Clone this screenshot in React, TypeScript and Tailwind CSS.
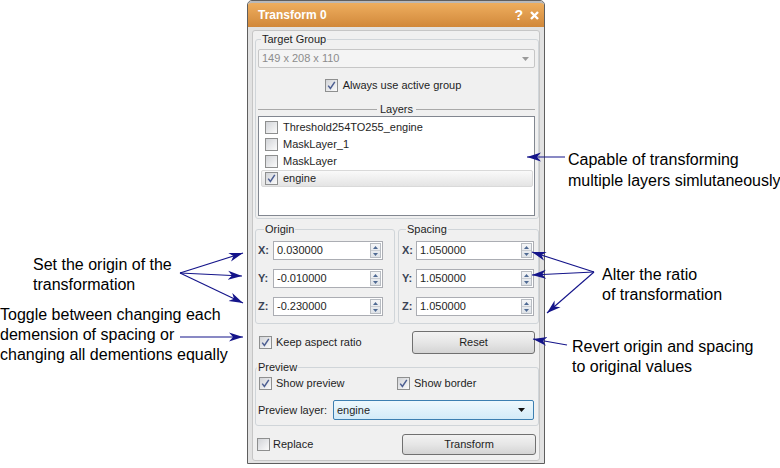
import type { ReactNode } from "react";

function Check({ checked }: { checked?: boolean }) {
  return (
    <span className="flex h-[13px] w-[13px] shrink-0 items-center justify-center border border-[#8e8f8f] bg-gradient-to-br from-[#d2d4d8] to-[#fbfbfb]">
      {checked && (
        <svg width="9" height="9" viewBox="0 0 9 9">
          <path d="M1.2 4.6 L3.4 7.4 L7.8 0.8" stroke="#4d5f92" strokeWidth="1.5" fill="none" />
        </svg>
      )}
    </span>
  );
}

function Button({ children, w }: { children: ReactNode; w: string }) {
  return (
    <div
      className={`flex items-center justify-center rounded-[3px] border border-[#707070] bg-gradient-to-b from-[#f2f2f2] via-[#e6e6e6] to-[#d4d4d4] ${w}`}
    >
      {children}
    </div>
  );
}

function Spin({ value, w }: { value: string; w: string }) {
  return (
    <div className={`flex h-[19px] items-center border border-[#abadb3] bg-white ${w}`}>
      <span className="flex-1 pl-[3px]">{value}</span>
      <span className="mr-[1px] flex h-[15px] w-[11px] flex-col border border-[#b8bcc2] bg-gradient-to-b from-[#f4f5f7] to-[#dfe3e8]">
        <span className="flex flex-1 items-center justify-center border-b border-[#c9cdd3]">
          <svg width="5" height="3" viewBox="0 0 5 3">
            <path d="M0 3 L2.5 0 L5 3 z" fill="#4f6a93" />
          </svg>
        </span>
        <span className="flex flex-1 items-center justify-center">
          <svg width="5" height="3" viewBox="0 0 5 3">
            <path d="M0 0 L2.5 3 L5 0 z" fill="#4f6a93" />
          </svg>
        </span>
      </span>
    </div>
  );
}

function Group({ title, className, legend, children }: { title: string; className: string; legend: string; children: ReactNode }) {
  return (
    <fieldset className={`rounded-[3px] border border-[#d0d5d9] ${className}`}>
      <legend className={`px-[1px] leading-[12px] ${legend}`}>{title}</legend>
      {children}
    </fieldset>
  );
}

const layers = [
  { name: "Threshold254TO255_engine", on: false },
  { name: "MaskLayer_1", on: false },
  { name: "MaskLayer", on: false },
  { name: "engine", on: true },
];

function Dialog() {
  return (
    <div className="flex h-[464px] w-[298px] shrink-0 flex-col rounded-t-[5px] border border-[#5e5e5e] bg-[#e2e2e2] text-[11px] text-[#1e1e1e]">
      {/* title bar */}
      <div className="flex h-[26px] items-center rounded-t-[4px] border-t-[2px] border-[#b9b9b9] bg-gradient-to-b from-[#eeae5e] to-[#d1883a] pl-[10px] pr-[5px] text-white">
        <span className="flex-1 text-[12px] font-bold">Transform 0</span>
        <span className="mr-[7px] text-[14px] font-bold leading-none">?</span>
        <svg width="9" height="9" viewBox="0 0 9 9">
          <path d="M1 1 L8 8 M8 1 L1 8" stroke="#fff" strokeWidth="2.4" />
        </svg>
      </div>

      <div className="flex flex-1 px-[4px] pb-[2px] pt-[3px]">
        <div className="flex flex-1 flex-col rounded-[3px] border border-[#c6c6c6] bg-[#f0f0f0] pl-[2px] pt-[2px]">
          {/* Target group */}
          <Group title="Target Group" className="w-[284px] pb-[2px] pl-[2px] pr-[3px]" legend="ml-[3px]">
            <div className="mt-[4px] flex h-[19px] items-center rounded-[2px] border border-[#c6c6c6] bg-[#f4f4f4] pl-[3px] pr-[5px] text-[#8c8c8c]">
              <span className="flex-1">149 x 208 x 110</span>
              <svg width="7" height="4" viewBox="0 0 7 4">
                <path d="M0 0 L7 0 L3.5 4 z" fill="#9a9a9a" />
              </svg>
            </div>
            <div className="mt-[11px] flex h-[13px] items-center justify-center gap-[5px] pr-[7px]">
              <Check checked />
              <span>Always use active group</span>
            </div>
            <div className="mt-[11px] flex h-[12px] items-center">
              <span className="h-px flex-1 bg-[#a9a9a9]" />
              <span className="px-[3px] leading-[12px]">Layers</span>
              <span className="h-px flex-1 bg-[#a9a9a9]" />
            </div>
            <div className="mt-[1px] h-[100px] border border-[#828790] bg-white pl-[2px] pr-[1px] pt-[2px]">
              {layers.map((l) => (
                <div
                  key={l.name}
                  className={`flex h-[17px] items-center gap-[5px] rounded-[2px] pl-[3px] ${
                    l.on ? "border border-[#d9d9d9] bg-gradient-to-b from-[#fafafa] to-[#e4e4e4]" : "border border-transparent"
                  }`}
                >
                  <Check checked={l.on} />
                  <span>{l.name}</span>
                </div>
              ))}
            </div>
          </Group>

          {/* Origin / spacing */}
          <div className="mt-[4px] flex gap-[3px]">
            <Group title="Origin" className="w-[140px] pb-[7px]" legend="ml-[8px]">
              <div className="mt-[6px] flex flex-col gap-[9px]">
                {[
                  ["X:", "0.030000"],
                  ["Y:", "-0.010000"],
                  ["Z:", "-0.230000"],
                ].map(([k, v]) => (
                  <div key={k} className="flex items-center">
                    <span className="w-[17px] pl-[2px] font-bold text-[#3a4354]">{k}</span>
                    <Spin value={v} w="w-[110px]" />
                  </div>
                ))}
              </div>
            </Group>
            <Group title="Spacing" className="w-[141px] pb-[7px]" legend="ml-[7px]">
              <div className="mt-[6px] flex flex-col gap-[9px]">
                {["X:", "Y:", "Z:"].map((k) => (
                  <div key={k} className="flex items-center">
                    <span className="w-[17px] pl-[3px] font-bold text-[#3a4354]">{k}</span>
                    <Spin value="1.050000" w="w-[118px]" />
                  </div>
                ))}
              </div>
            </Group>
          </div>

          {/* Keep aspect ratio / Reset */}
          <div className="mt-[7px] flex h-[23px] items-center pl-[4px] pr-[4px]">
            <Check checked />
            <span className="ml-[4px] flex-1">Keep aspect ratio</span>
            <Button w="h-[23px] w-[123px]">Reset</Button>
          </div>

          {/* Preview */}
          <Group title="Preview" className="mt-[7px] w-[284px] pb-[5px]" legend="ml-[1px]">
            <div className="mt-[4px] flex h-[13px] items-center pl-[3px]">
              <div className="flex w-[138px] items-center gap-[4px]">
                <Check checked />
                <span>Show preview</span>
              </div>
              <div className="flex items-center gap-[4px]">
                <Check checked />
                <span>Show border</span>
              </div>
            </div>
            <div className="mt-[10px] flex h-[20px] items-center pl-[2px] pr-[4px]">
              <span className="flex-1">Preview layer:</span>
              <div className="flex h-[20px] w-[201px] items-center rounded-[2px] border border-[#3c7fb1] bg-gradient-to-b from-[#eef8fd] to-[#d3ebf8] pl-[3px] pr-[8px]">
                <span className="flex-1">engine</span>
                <svg width="7" height="4" viewBox="0 0 7 4">
                  <path d="M0 0 L7 0 L3.5 4 z" fill="#111" />
                </svg>
              </div>
            </div>
          </Group>

          {/* Replace / Transform */}
          <div className="mt-[8px] flex h-[21px] items-center pl-[2px] pr-[3px]">
            <Check />
            <span className="ml-[3px] flex-1">Replace</span>
            <Button w="h-[21px] w-[134px]">Transform</Button>
          </div>
        </div>
      </div>
    </div>
  );
}

function Arrows() {
  const c = "#14148a";
  const lines: [number, number, number, number][] = [
    [565, 157, 527, 157],
    [180, 273, 243, 253],
    [180, 273, 242, 276],
    [180, 273, 243, 303],
    [180, 337, 243, 337],
    [594, 272, 532, 252],
    [594, 272, 532, 275],
    [594, 272, 547, 313],
    [567, 345, 533, 339],
  ];
  return (
    <svg className="pointer-events-none absolute inset-0" width="780" height="468" viewBox="0 0 780 468">
      <defs>
        <marker id="ah" markerUnits="userSpaceOnUse" markerWidth="14" markerHeight="10" refX="14" refY="5" orient="auto">
          <path d="M0 0.5 L14 5 L0 9.5 L4 5 z" fill={c} />
        </marker>
      </defs>
      {lines.map(([x1, y1, x2, y2], i) => (
        <line key={i} x1={x1} y1={y1} x2={x2} y2={y2} stroke={c} strokeWidth="1.1" markerEnd="url(#ah)" />
      ))}
    </svg>
  );
}

export default function App() {
  return (
    <div className="relative flex h-[468px] w-[780px] overflow-hidden bg-white font-['Liberation_Sans',Arial,sans-serif] text-black">
      {/* left notes */}
      <div className="flex w-[247px] shrink-0 flex-col whitespace-nowrap text-[16px] leading-[20px]">
        <p className="mt-[255px] pl-[33px]">
          Set the origin of the
          <br />
          transformation
        </p>
        <p className="mt-[10px]">
          Toggle between changing each
          <br />
          demension of spacing or
          <br />
          changing all dementions equally
        </p>
      </div>

      <Dialog />

      {/* right notes */}
      <div className="flex flex-1 flex-col whitespace-nowrap text-[16px] leading-[20px]">
        <p className="mt-[149px] pl-[23px] leading-[21px]">
          Capable of transforming
          <br />
          multiple layers simlutaneously
        </p>
        <p className="mt-[74px] pl-[57px]">
          Alter the ratio
          <br />
          of transformation
        </p>
        <p className="mt-[32px] pl-[27px]">
          Revert origin and spacing
          <br />
          to original values
        </p>
      </div>

      <Arrows />
    </div>
  );
}
